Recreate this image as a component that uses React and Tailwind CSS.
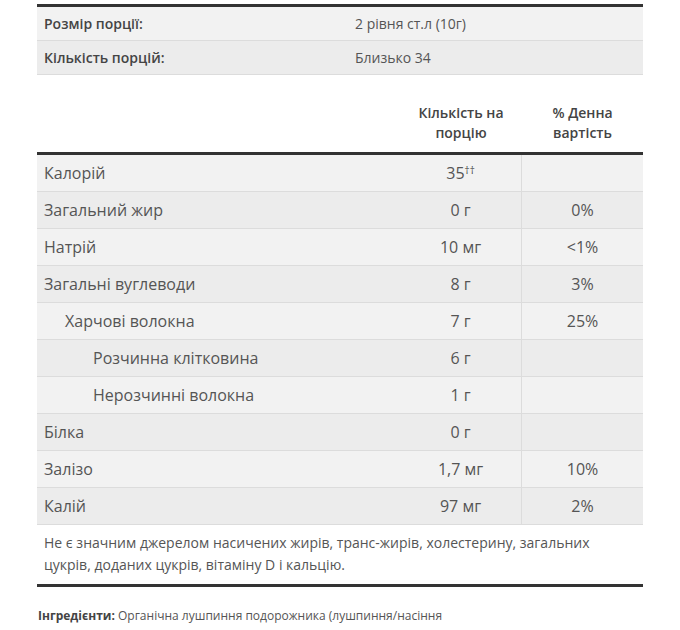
import React from "react";

const rows = [
  { name: "Калорій", amt: "35", sup: "††", dv: "", indent: 0 },
  { name: "Загальний жир", amt: "0 г", dv: "0%", indent: 0 },
  { name: "Натрій", amt: "10 мг", dv: "<1%", indent: 0 },
  { name: "Загальні вуглеводи", amt: "8 г", dv: "3%", indent: 0 },
  { name: "Харчові волокна", amt: "7 г", dv: "25%", indent: 1 },
  { name: "Розчинна клітковина", amt: "6 г", dv: "", indent: 2 },
  { name: "Нерозчинні волокна", amt: "1 г", dv: "", indent: 2 },
  { name: "Білка", amt: "0 г", dv: "", indent: 0 },
  { name: "Залізо", amt: "1,7 мг", dv: "10%", indent: 0 },
  { name: "Калій", amt: "97 мг", dv: "2%", indent: 0 },
];

export default function App() {
  return (
    <div
      className="min-h-[630px] bg-white pt-[4px] text-[#555]"
      style={{ fontFamily: '"Open Sans", "Noto Sans", sans-serif' }}
    >
      <div className="mx-auto w-[606px]">
        <div className="h-[3px] bg-[#333]" />
        <div className="flex h-[34px] items-center border-b border-[#dcdcdc] bg-[#f2f2f2] text-[14px]">
          <div className="w-[318px] pl-[7px] font-semibold text-[#444]">Розмір порції:</div>
          <div>2 рівня ст.л (10г)</div>
        </div>
        <div className="flex h-[34px] items-center border-b border-[#dcdcdc] bg-[#ececec] text-[14px]">
          <div className="w-[318px] pl-[7px] font-semibold text-[#444]">Кількість порцій:</div>
          <div>Близько 34</div>
        </div>
        <div className="flex h-[77px] items-end pb-[9px] text-[14px] font-semibold leading-[20px] text-[#444]">
          <div className="flex-1" />
          <div className="w-[122px] text-center">
            Кількість на
            <br />
            порцію
          </div>
          <div className="w-[121px] text-center">
            % Денна
            <br />
            вартість
          </div>
        </div>
        <div className="h-[3px] bg-[#333]" />
        {rows.map((r, i) => (
          <div
            key={r.name}
            className={`flex h-[37px] border-b border-[#dcdcdc] text-[16px] ${
              i % 2 === 0 ? "bg-[#f2f2f2]" : "bg-[#ececec]"
            }`}
          >
            <div
              className={`flex flex-1 items-center ${
                r.indent === 0 ? "pl-[7px]" : r.indent === 1 ? "pl-[28px]" : "pl-[56px]"
              }`}
            >
              {r.name}
            </div>
            <div className="flex w-[122px] items-center justify-center border-r border-[#dcdcdc]">
              {r.amt}
              {r.sup && <sup className="relative top-[-3px] text-[10px] text-[#444]">{r.sup}</sup>}
            </div>
            <div className="flex w-[121px] items-center justify-center">{r.dv}</div>
          </div>
        ))}
        <div className="px-[7px] pt-[7px] pb-[8px] text-[14px] leading-[22px]">
          Не є значним джерелом насичених жирів, транс-жирів, холестерину, загальних
          <br />
          цукрів, доданих цукрів, вітаміну D і кальцію.
        </div>
        <div className="h-[3px] bg-[#333]" />
        <div className="pt-[20px] pl-[1px] text-[12px]">
          <span className="font-bold text-[#444]">Інгредієнти:</span> Органічна лушпиння подорожника (лушпиння/насіння
        </div>
      </div>
    </div>
  );
}
